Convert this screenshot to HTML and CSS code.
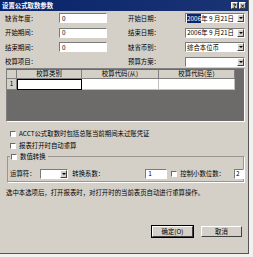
FILE: index.html
```html
<!DOCTYPE html>
<html lang="zh">
<head>
    <meta charset="UTF-8">
    <title>设置公式取数参数</title>
    <link rel="stylesheet" href="styles.css">
</head>
<body>
    <div class="dialogo">
        <div class="titulo">
            <span class="titulo-texto">设置公式取数参数</span>
            <div class="titulo-botones">
                <span class="tb">?</span>
                <span class="tb">×</span>
            </div>
        </div>

        <div class="campos">
            <label>缺省年度：</label>
            <input type="text" class="caja" value="0">
            <label>开始日期：</label>
            <div class="combo"><span><b class="marcado">2006</b>年 9 月21日</span><i class="flecha"></i></div>

            <label>开始期间：</label>
            <input type="text" class="caja" value="0">
            <label>结束日期：</label>
            <div class="combo"><span>2006年 9 月21日</span><i class="flecha"></i></div>

            <label>结束期间：</label>
            <input type="text" class="caja" value="0">
            <label>缺省币别：</label>
            <div class="combo"><span>综合本位币</span><i class="flecha"></i></div>

            <label>校算项目：</label>
            <span></span>
            <label>预算方案：</label>
            <div class="combo"><span></span><i class="flecha"></i></div>
        </div>

        <div class="tabla">
            <div class="cab"></div>
            <div class="cab">校算类别</div>
            <div class="cab">校算代码(从)</div>
            <div class="cab">校算代码(至)</div>
            <div class="cab num">1</div>
            <div class="celda activa"></div>
            <div class="celda"></div>
            <div class="celda"></div>
        </div>

        <div class="opcion primera"><span class="check"></span>ACCT公式取数时包括总账当前期间未过账凭证</div>
        <div class="opcion"><span class="check"></span>报表打开时自动重算</div>

        <fieldset class="grupo">
            <legend class="leyenda"><span class="check"></span>数值转换</legend>
            <div class="fila-grupo">
                <label>运算符：</label>
                <div class="combo corto"><span></span><i class="flecha"></i></div>
                <label class="coef">转换系数：</label>
                <input type="text" class="caja chica" value="1">
                <span class="check"></span>
                <label>控制小数位数：</label>
                <input type="text" class="caja mini" value="2">
            </div>
        </fieldset>

        <p class="nota">选中本选项后，打开报表时，对打开时的当前表页自动进行重算操作。</p>

        <div class="botones">
            <button class="defecto">确定(O)</button>
            <button>取消</button>
        </div>
    </div>
</body>
</html>
```

FILE: styles.css
```css
body {
    margin: 0;
    background: #f2f2f0;
    font-family: "Noto Sans CJK SC", "Noto Sans", sans-serif;
    font-size: 6.4px;
    color: #000;
    white-space: nowrap;
}

.dialogo {
    width: 248px;
    height: 253px;
    background: #d4d0c8;
    border-right: 1px solid #555;
    border-bottom: 1px solid #555;
    display: flex;
    flex-direction: column;
}

.titulo {
    height: 11px;
    background: linear-gradient(to right, #0a246a, #1a3475);
    color: white;
    font-weight: bold;
    display: flex;
    align-items: center;
    justify-content: space-between;
    padding: 0 2px;
}

.titulo-botones {
    display: flex;
    gap: 1px;
}

.tb {
    width: 7px;
    height: 7px;
    background: #d4d0c8;
    color: #000;
    font-size: 6px;
    line-height: 6px;
    text-align: center;
    border: 1px solid;
    border-color: #fff #404040 #404040 #fff;
    box-sizing: border-box;
    font-family: "DejaVu Sans", sans-serif;
}

.campos {
    display: grid;
    grid-template-columns: 54px 48px 78px 60px;
    grid-template-rows: repeat(4, 10px);
    row-gap: 4.5px;
    margin: 2px 0 0 5px;
    align-items: center;
}

.campos label:nth-of-type(2n) {
    margin-left: 21px;
}

.caja {
    height: 10px;
    box-sizing: border-box;
    border: 1px solid;
    border-color: #7a7a7a #fff #fff #7a7a7a;
    background: white;
    font: inherit;
    padding: 0 2px;
    margin: 0;
    width: 48px;
    outline: none;
}

.combo {
    height: 10px;
    box-sizing: border-box;
    border: 1px solid;
    border-color: #7a7a7a #fff #fff #7a7a7a;
    background: white;
    display: flex;
    align-items: center;
    justify-content: space-between;
    padding-left: 1px;
}

.marcado {
    background: #0a246a;
    color: white;
    font-weight: normal;
}

.flecha {
    width: 7px;
    height: 8px;
    background: #d4d0c8;
    border: 1px solid;
    border-color: #fff #404040 #404040 #fff;
    box-sizing: border-box;
    position: relative;
}

.flecha::after {
    content: "";
    position: absolute;
    left: 1px;
    top: 2px;
    border-left: 2px solid transparent;
    border-right: 2px solid transparent;
    border-top: 2px solid #000;
}

.tabla {
    margin: 1px 0 0 6px;
    width: 239px;
    height: 54px;
    box-sizing: border-box;
    background: #6d6b69;
    border: 1px solid;
    border-color: #808080 #fff #fff #808080;
    display: grid;
    grid-template-columns: 10px 65px 77px 76px;
    grid-template-rows: 9px 11px;
    align-content: start;
    padding-top: 1px;
}

.cab {
    background: #d4d0c8;
    border-right: 1px solid #808080;
    border-bottom: 1px solid #808080;
    text-align: center;
    line-height: 8px;
}

.num {
    line-height: 10px;
}

.celda {
    background: white;
    border-right: 1px solid #c0c0c0;
    border-bottom: 1px solid #c0c0c0;
}

.celda.activa {
    border: 1px solid #000;
}

.opcion {
    display: flex;
    align-items: center;
    height: 8px;
    margin: 4px 0 0 10px;
}

.opcion.primera {
    margin-top: 8px;
}

.check {
    width: 6px;
    height: 6px;
    box-sizing: border-box;
    background: white;
    border: 1px solid;
    border-color: #6a6a6a #fff #fff #6a6a6a;
    margin-right: 3px;
    flex-shrink: 0;
}

.grupo {
    margin: 3px 0 0 7px;
    width: 238px;
    height: 30px;
    box-sizing: border-box;
    border: 1px solid #9a968e;
    border-right-color: #fff;
    border-bottom-color: #fff;
    box-shadow: inset -1px -1px #9a968e;
    padding: 0 0 0 2px;
    min-width: 0;
}

.leyenda {
    display: flex;
    align-items: center;
    height: 8px;
    padding: 0 2px 0 1px;
    margin-left: 0;
}

.fila-grupo {
    display: flex;
    align-items: center;
    height: 10px;
    margin-top: 8px;
}

.combo.corto {
    width: 31px;
    margin-left: 4px;
}

.coef {
    margin-left: 4px;
}

.caja.chica {
    width: 22px;
    margin-left: 41px;
    margin-right: 4px;
}

.caja.mini {
    width: 10px;
    margin-left: 9px;
    padding: 0 1px;
}

.nota {
    margin: 6px 0 0 6px;
    line-height: 8px;
}

.botones {
    margin-top: auto;
    margin-bottom: 16px;
    display: flex;
    justify-content: flex-end;
    gap: 8px;
    padding-right: 6px;
}

button {
    width: 41px;
    height: 11px;
    padding: 0;
    background: #d4d0c8;
    border: 1px solid;
    border-color: #fff #404040 #404040 #fff;
    font: inherit;
}

button.defecto {
    outline: 1px solid #000;
}
```
